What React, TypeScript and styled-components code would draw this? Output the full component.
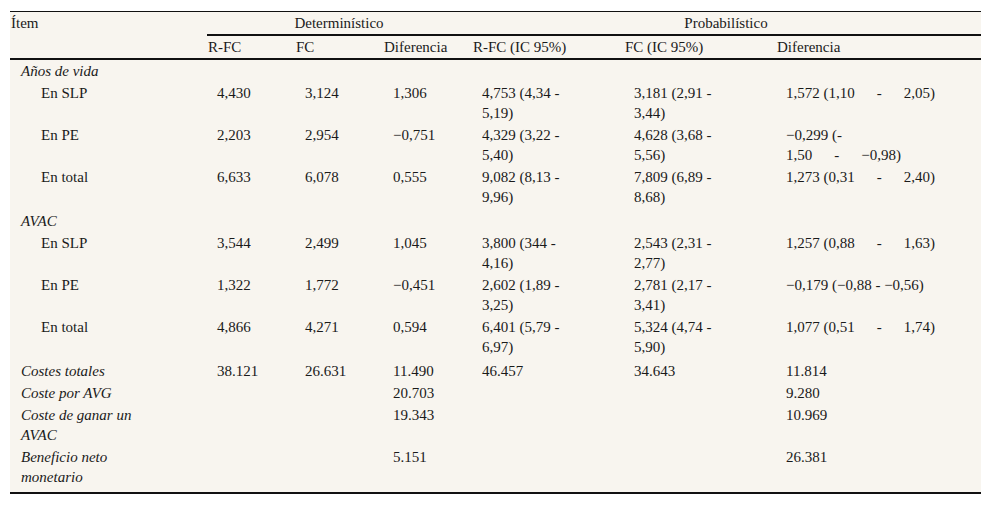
import React from "react";
import styled, { createGlobalStyle } from "styled-components";

const Global = createGlobalStyle`
  html, body { margin: 0; padding: 0; background: #ffffff; }
  body { font-family: "Liberation Serif", "Times New Roman", serif; color: #1a1a1a; }
`;

const Page = styled.div`
  padding: 11px 11px 0 10px;
`;

const Table = styled.table`
  width: 971px;
  border-collapse: collapse;
  table-layout: fixed;
  background: #f8f5ef;
  font-size: 15px;
  line-height: 20px;
  border-top: 1px solid #111;
  border-bottom: 2px solid #111;
`;

const HeadCell = styled.th<{ $center?: boolean; $rule?: boolean }>`
  font-weight: normal;
  text-align: ${(p) => (p.$center ? "center" : "left")};
  vertical-align: top;
  padding: 1px 2px 1px 1px;
  ${(p) => (p.$rule ? "border-bottom: 2px solid #111;" : "")}
`;

const HeadRow = styled.tr<{ $thick?: boolean }>`
  ${(p) => (p.$thick ? "border-bottom: 2px solid #111;" : "")}
`;

const Row = styled.tr``;

const LabelCell = styled.td<{ $indent?: boolean; $italic?: boolean; $top?: number; $bottom?: number }>`
  vertical-align: top;
  padding: ${(p) => (p.$top ?? 1)}px 4px ${(p) => (p.$bottom ?? 1)}px
    ${(p) => (p.$indent ? 31 : 11)}px;
  font-style: ${(p) => (p.$italic ? "italic" : "normal")};
`;

const Cell = styled.td<{ $top?: number; $bottom?: number }>`
  vertical-align: top;
  padding: ${(p) => (p.$top ?? 1)}px 4px ${(p) => (p.$bottom ?? 1)}px 10px;
  white-space: nowrap;
`;

const Line = styled.div``;

const Gap = styled.span`
  display: inline-block;
  width: 22px;
`;

type Range = { head: string; hi: string };
type Val = string | string[] | Range;

function Spread({ head, hi }: Range) {
  return (
    <Line>
      {head}
      <Gap />-<Gap />
      {hi}
    </Line>
  );
}

function renderVal(v: Val | undefined) {
  if (v === undefined) return null;
  if (typeof v === "string") return v;
  if (Array.isArray(v)) return v.map((l, i) => <Line key={i}>{l}</Line>);
  return <Spread head={v.head} hi={v.hi} />;
}

type RowData = {
  label: string[];
  indent?: boolean;
  italic?: boolean;
  top?: number;
  bottom?: number;
  cells: (Val | undefined)[];
  custom?: React.ReactNode;
};

const rows: RowData[] = [
  { label: ["Años de vida"], italic: true, cells: [] },
  {
    label: ["En SLP"],
    indent: true,
    cells: [
      "4,430",
      "3,124",
      "1,306",
      ["4,753 (4,34 -", "5,19)"],
      ["3,181 (2,91 -", "3,44)"],
      { head: "1,572 (1,10", hi: "2,05)" },
    ],
  },
  {
    label: ["En PE"],
    indent: true,
    cells: [
      "2,203",
      "2,954",
      "\u22120,751",
      ["4,329 (3,22 -", "5,40)"],
      ["4,628 (3,68 -", "5,56)"],
    ],
    custom: (
      <>
        <Line>{"\u22120,299 (-"}</Line>
        <Spread head="1,50" hi={"\u22120,98)"} />
      </>
    ),
  },
  {
    label: ["En total"],
    indent: true,
    cells: [
      "6,633",
      "6,078",
      "0,555",
      ["9,082 (8,13 -", "9,96)"],
      ["7,809 (6,89 -", "8,68)"],
      { head: "1,273 (0,31", hi: "2,40)" },
    ],
  },
  { label: ["AVAC"], italic: true, top: 3, cells: [] },
  {
    label: ["En SLP"],
    indent: true,
    cells: [
      "3,544",
      "2,499",
      "1,045",
      ["3,800 (344 -", "4,16)"],
      ["2,543 (2,31 -", "2,77)"],
      { head: "1,257 (0,88", hi: "1,63)" },
    ],
  },
  {
    label: ["En PE"],
    indent: true,
    cells: [
      "1,322",
      "1,772",
      "\u22120,451",
      ["2,602 (1,89 -", "3,25)"],
      ["2,781 (2,17 -", "3,41)"],
      "\u22120,179 (\u22120,88 - \u22120,56)",
    ],
  },
  {
    label: ["En total"],
    indent: true,
    cells: [
      "4,866",
      "4,271",
      "0,594",
      ["6,401 (5,79 -", "6,97)"],
      ["5,324 (4,74 -", "5,90)"],
      { head: "1,077 (0,51", hi: "1,74)" },
    ],
  },
  {
    label: ["Costes totales"],
    italic: true,
    top: 3,
    cells: ["38.121", "26.631", "11.490", "46.457", "34.643", "11.814"],
  },
  {
    label: ["Coste por AVG"],
    italic: true,
    cells: [undefined, undefined, "20.703", undefined, undefined, "9.280"],
  },
  {
    label: ["Coste de ganar un", "AVAC"],
    italic: true,
    cells: [undefined, undefined, "19.343", undefined, undefined, "10.969"],
  },
  {
    label: ["Beneficio neto", "monetario"],
    italic: true,
    bottom: 5,
    cells: [undefined, undefined, "5.151", undefined, undefined, "26.381"],
  },
];

export default function App() {
  return (
    <>
      <Global />
      <Page>
        <Table>
          <colgroup>
            <col style={{ width: 197 }} />
            <col style={{ width: 88 }} />
            <col style={{ width: 88 }} />
            <col style={{ width: 89 }} />
            <col style={{ width: 152 }} />
            <col style={{ width: 152 }} />
            <col style={{ width: 205 }} />
          </colgroup>
          <thead>
            <HeadRow>
              <HeadCell>Ítem</HeadCell>
              <HeadCell colSpan={3} $center $rule>
                Determinístico
              </HeadCell>
              <HeadCell colSpan={3} $center $rule>
                Probabilístico
              </HeadCell>
            </HeadRow>
            <HeadRow $thick>
              <HeadCell />
              <HeadCell>R-FC</HeadCell>
              <HeadCell>FC</HeadCell>
              <HeadCell>Diferencia</HeadCell>
              <HeadCell>R-FC (IC 95%)</HeadCell>
              <HeadCell>FC (IC 95%)</HeadCell>
              <HeadCell>Diferencia</HeadCell>
            </HeadRow>
          </thead>
          <tbody>
            {rows.map((r, i) => (
              <Row key={i}>
                <LabelCell
                  $indent={r.indent}
                  $italic={r.italic}
                  $top={r.top}
                  $bottom={r.bottom}
                >
                  {r.label.map((l, j) => (
                    <Line key={j}>{l}</Line>
                  ))}
                </LabelCell>
                {Array.from({ length: 6 }).map((_, c) => (
                  <Cell key={c} $top={r.top} $bottom={r.bottom}>
                    {c === 5 && r.custom ? r.custom : renderVal(r.cells[c])}
                  </Cell>
                ))}
              </Row>
            ))}
          </tbody>
        </Table>
      </Page>
    </>
  );
}
